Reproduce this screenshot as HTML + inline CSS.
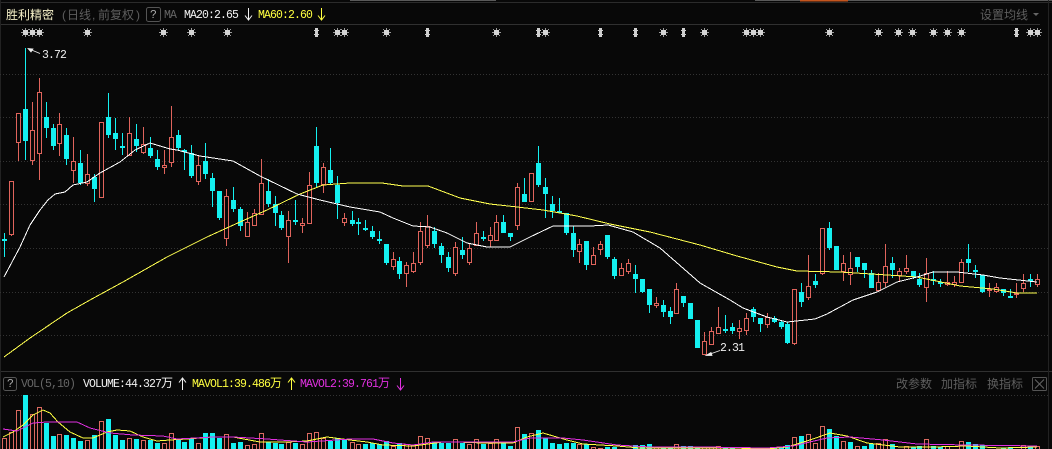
<!DOCTYPE html>
<html><head><meta charset="utf-8"><style>
html,body{margin:0;padding:0;background:#080808;width:1052px;height:449px;overflow:hidden}
svg{display:block}
text{font-family:"Liberation Mono","Noto Sans CJK SC",monospace;font-size:11.5px;letter-spacing:-.9px}
.c,tspan.c{font-family:"Liberation Sans","Noto Sans CJK SC",sans-serif;font-size:12px;letter-spacing:0}
polyline{shape-rendering:crispEdges}
</style></head><body>
<svg width="1052" height="449" viewBox="0 0 1052 449" xmlns="http://www.w3.org/2000/svg">
<rect width="1052" height="449" fill="#080808"/>
<g shape-rendering="crispEdges" fill="none">
<path d="M0 2.5H1052" stroke="#2b2b2b"/>
<path d="M350 0.5H496M755 0.5H1052" stroke="#5a5a5a"/>
<path d="M800 0.5H848" stroke="#c4551e" stroke-width="2"/>
<path d="M0 24.5H1040M0 371.5H1052" stroke="#303030"/>
<path d="M0.5 0V449M1048.5 0V449" stroke="#222"/>
<path d="M0 74.5H1048M0 117.5H1048M0 161.5H1048M0 204.5H1048M0 248.5H1048M0 292.5H1048M0 335.5H1048M0 395.5H1048" stroke="#333" stroke-dasharray="1 2"/>
</g>
<!-- volume bars -->
<g shape-rendering="crispEdges" fill="none">
<path stroke="#14f0f0" stroke-width="5" d="M25.5 395V449M46.5 423V449M53.5 436V449M66.5 435V449M73.5 438V449M80.5 441V449M94.5 435V449M108.5 419V449M115.5 435V449M122.5 440V449M136.5 439V449M150.5 440V449M157.5 443V449M178.5 440V449M184.5 442V449M191.5 438V449M205.5 433V449M212.5 433V449M219.5 438V449M233.5 443V449M240.5 442V449M268.5 442V449M275.5 443V449M281.5 444V449M295.5 443V449M330.5 441V449M337.5 438V449M344.5 439V449M365.5 444V449M372.5 443V449M379.5 444V449M386.5 441V449M399.5 443V449M434.5 442V449M441.5 443V449M448.5 443V449M462.5 443V449M483.5 444V449M503.5 443V449M510.5 446V449M524.5 434V449M538.5 430V449M545.5 438V449M552.5 443V449M559.5 444V449M566.5 443V449M573.5 443V449M586.5 444V449M607.5 447V449M614.5 447V449M635.5 445V449M642.5 445V449M649.5 444V449M663.5 447V449M670.5 447V449M683.5 446V449M690.5 446V449M697.5 447V449M725.5 447V449M732.5 448V449M753.5 448V449M760.5 448V449M774.5 448V449M781.5 448V449M787.5 445V449M801.5 436V449M829.5 429V449M836.5 436V449M850.5 442V449M864.5 446V449M871.5 444V449M892.5 444V449M913.5 447V449M919.5 446V449M933.5 446V449M940.5 447V449M968.5 442V449M975.5 444V449M982.5 445V449M1003.5 448V449M1010.5 447V449M1030.5 446V449"/>
<path stroke="#dc6a60" d="M2.5 449V438.5H6.5V449M9.5 449V432.5H13.5V449M16.5 449V410.5H20.5V449M30.5 449V414.5H34.5V449M37.5 449V407.5H41.5V449M57.5 449V434.5H61.5V449M85.5 449V440.5H89.5V449M99.5 449V421.5H103.5V449M127.5 449V438.5H131.5V449M141.5 449V440.5H145.5V449M162.5 449V443.5H166.5V449M169.5 449V433.5H173.5V449M196.5 449V443.5H200.5V449M224.5 449V434.5H228.5V449M245.5 449V445.5H249.5V449M252.5 449V444.5H256.5V449M259.5 449V433.5H263.5V449M286.5 449V442.5H290.5V449M300.5 449V444.5H304.5V449M307.5 449V433.5H311.5V449M314.5 449V432.5H318.5V449M321.5 449V438.5H325.5V449M350.5 449V442.5H354.5V449M356.5 449V444.5H360.5V449M391.5 449V446.5H395.5V449M404.5 449V444.5H408.5V449M411.5 449V445.5H415.5V449M418.5 449V436.5H422.5V449M425.5 449V438.5H429.5V449M453.5 449V439.5H457.5V449M467.5 449V444.5H471.5V449M474.5 449V439.5H478.5V449M488.5 449V443.5H492.5V449M494.5 449V439.5H498.5V449M515.5 449V427.5H519.5V449M529.5 449V433.5H533.5V449M577.5 449V444.5H581.5V449M591.5 449V447.5H595.5V449M598.5 449V448.5H602.5V449M654.5 449V447.5H658.5V449M674.5 449V444.5H678.5V449M702.5 449V447.5H706.5V449M709.5 449V447.5H713.5V449M716.5 449V446.5H720.5V449M744.5 449V447.5H748.5V449M792.5 449V437.5H796.5V449M806.5 449V434.5H810.5V449M813.5 449V443.5H817.5V449M820.5 449V426.5H824.5V449M841.5 449V441.5H845.5V449M855.5 449V446.5H859.5V449M876.5 449V443.5H880.5V449M883.5 449V439.5H887.5V449M904.5 449V446.5H908.5V449M924.5 449V439.5H928.5V449M945.5 449V446.5H949.5V449M959.5 449V441.5H963.5V449M1021.5 449V445.5H1025.5V449M1035.5 449V446.5H1039.5V449"/>
</g>
<polyline fill="none" stroke="#ffff40" points="3,437 13,432 23,425 33,415 43,410 50,413 58,422 70,432 83,438 93,438 107,432 117,430 130,431 143,437 157,441 170,440 187,439 213,437 233,437 260,442 287,442 307,441 327,437 350,440 367,442 383,445 413,446 443,442 457,442 483,443 513,443 527,437 543,433 567,440 583,444 617,446 640,448 733,448 767,449 787,447 810,440 830,433 847,436 867,443 900,447 933,447 967,446 1000,448 1037,447"/>
<polyline fill="none" stroke="#e030e0" points="3,429 17,431 33,423 47,422 77,422 90,428 110,433 133,435 163,436 177,439 213,437 233,437 267,439 307,442 350,439 373,439 393,443 413,445 433,442 483,442 513,442 530,438 563,438 583,440 617,445 650,447 700,447 767,448 793,446 827,438 850,437 883,440 917,444 967,445 1037,446"/>
<!-- candles -->
<g shape-rendering="crispEdges">
<path fill="none" stroke="#14f0f0" d="M4.5 233V257M25.5 48V160M46.5 102V138M53.5 124V150M66.5 128V165M80.5 150V185M94.5 174V202M108.5 93V138M115.5 118V150M122.5 133V155M136.5 124V152M150.5 137V158M157.5 150V170M178.5 130V150M184.5 149V170M191.5 145V178M205.5 143V179M212.5 173V207M219.5 191V220M233.5 187V212M240.5 207V231M268.5 179V207M275.5 196V226M281.5 211V230M295.5 200V225M316.5 127V187M330.5 148V185M337.5 176V219M352.5 211V226M358.5 218V235M365.5 220V231M372.5 226V239M379.5 231V244M386.5 244V265M399.5 257V279M434.5 227V248M441.5 243V263M448.5 252V272M462.5 237V259M483.5 231V241M503.5 215V233M510.5 233V241M524.5 178V202M538.5 146V187M545.5 178V218M552.5 196V218M559.5 198V213M566.5 213V235M573.5 226V257M586.5 241V270M607.5 235V259M614.5 257V279M635.5 265V293M642.5 279V293M649.5 289V313M663.5 300V317M670.5 307V324M683.5 296V307M690.5 303V319M697.5 320V348M725.5 315V333M732.5 323V334M753.5 307V322M760.5 318V332M774.5 316V323M781.5 320V329M787.5 322V344M801.5 283V307M815.5 274V288M829.5 222V250M836.5 246V270M857.5 257V272M864.5 263V278M871.5 270V288M892.5 257V278M913.5 271V279M919.5 273V287M933.5 271V285M940.5 279V287M968.5 244V272M975.5 265V278M982.5 275V293M1003.5 289V296M1010.5 289V297M1030.5 274V287"/>
<path fill="none" stroke="#14f0f0" stroke-width="5" d="M4.5 239V241M25.5 109V141M46.5 117V128M53.5 128V146M66.5 135V159M80.5 163V183M94.5 177V189M108.5 117V135M115.5 133V139M122.5 146V148M136.5 139V146M150.5 148V156M157.5 159V167M178.5 135V148M184.5 150V152M191.5 153V176M205.5 161V174M212.5 178V191M219.5 191V218M233.5 200V209M240.5 209V226M268.5 191V204M275.5 204V213M281.5 215V228M295.5 220V222M316.5 146V183M330.5 170V183M337.5 185V203M352.5 220V224M358.5 222V224M365.5 228V230M372.5 231V237M379.5 239V241M386.5 244V263M399.5 261V274M434.5 231V244M441.5 246V255M448.5 257V268M462.5 250V255M483.5 237V239M503.5 222V233M510.5 233V237M524.5 194V202M538.5 163V185M545.5 187V194M552.5 204V211M559.5 211V213M566.5 213V233M573.5 233V250M586.5 241V265M607.5 235V257M614.5 259V276M635.5 274V279M642.5 279V292M649.5 289V305M663.5 305V312M670.5 311V317M683.5 296V303M690.5 303V319M697.5 320V348M725.5 329V331M732.5 327V331M753.5 309V317M760.5 318V324M774.5 318V322M781.5 322V327M787.5 324V343M801.5 292V302M815.5 281V285M829.5 228V248M836.5 246V270M857.5 257V267M864.5 263V270M871.5 273V288M892.5 263V270M913.5 271V277M919.5 279V285M933.5 279V281M940.5 282V284M968.5 259V263M975.5 270V272M982.5 275V292M1003.5 289V293M1010.5 296V298M1030.5 279V281"/>
<path fill="none" stroke="#e0645c" d="M11.5 181V236M18.5 113V161M32.5 102V165M39.5 78V180M59.5 113V156M73.5 137V183M87.5 154V186M101.5 122V197M129.5 117V155M143.5 127V154M164.5 150V174M171.5 106V167M198.5 155V185M226.5 189V246M247.5 212V237M254.5 209V225M261.5 159V215M288.5 211V263M302.5 218V233M309.5 172V223M323.5 163V193M344.5 213V226M393.5 252V270M406.5 262V287M413.5 252V273M420.5 222V265M427.5 215V248M455.5 242V276M469.5 244V265M476.5 222V246M490.5 227V247M496.5 215V240M517.5 183V230M531.5 173V202M579.5 239V263M593.5 247V265M600.5 241V255M621.5 263V275M628.5 259V274M656.5 297V308M676.5 283V313M704.5 332V355M711.5 327V344M718.5 307V333M739.5 320V339M746.5 313V335M767.5 313V328M794.5 289V345M808.5 255V300M822.5 228V275M843.5 255V281M850.5 252V285M878.5 273V292M885.5 244V287M899.5 268V281M906.5 255V274M926.5 258V302M947.5 271V286M954.5 276V287M961.5 259V283M989.5 283V297M996.5 283V293M1016.5 283V298M1023.5 274V292M1037.5 274V287"/>
<path fill="#080808" stroke="#e0645c" d="M9.5 181.5H13.5V234.5H9.5ZM16.5 113.5H20.5V142.5H16.5ZM30.5 130.5H34.5V160.5H30.5ZM37.5 92.5H41.5V153.5H37.5ZM57.5 124.5H61.5V143.5H57.5ZM71.5 161.5H75.5V170.5H71.5ZM85.5 174.5H89.5V183.5H85.5ZM99.5 122.5H103.5V197.5H99.5ZM127.5 133.5H131.5V155.5H127.5ZM141.5 144.5H145.5V152.5H141.5ZM162.5 165.5H166.5V167.5H162.5ZM169.5 137.5H173.5V162.5H169.5ZM196.5 165.5H200.5V181.5H196.5ZM224.5 196.5H228.5V238.5H224.5ZM245.5 222.5H249.5V236.5H245.5ZM252.5 213.5H256.5V225.5H252.5ZM259.5 183.5H263.5V214.5H259.5ZM286.5 220.5H290.5V236.5H286.5ZM300.5 223.5H304.5V225.5H300.5ZM307.5 185.5H311.5V223.5H307.5ZM321.5 167.5H325.5V184.5H321.5ZM342.5 218.5H346.5V222.5H342.5ZM391.5 259.5H395.5V266.5H391.5ZM404.5 265.5H408.5V273.5H404.5ZM411.5 263.5H415.5V271.5H411.5ZM418.5 231.5H422.5V262.5H418.5ZM425.5 226.5H429.5V245.5H425.5ZM453.5 247.5H457.5V273.5H453.5ZM467.5 248.5H471.5V262.5H467.5ZM474.5 233.5H478.5V245.5H474.5ZM488.5 235.5H492.5V240.5H488.5ZM494.5 222.5H498.5V240.5H494.5ZM515.5 187.5H519.5V225.5H515.5ZM529.5 173.5H533.5V201.5H529.5ZM577.5 244.5H581.5V251.5H577.5ZM591.5 255.5H595.5V264.5H591.5ZM598.5 244.5H602.5V249.5H598.5ZM619.5 268.5H623.5V275.5H619.5ZM626.5 263.5H630.5V271.5H626.5ZM654.5 303.5H658.5V305.5H654.5ZM674.5 289.5H678.5V313.5H674.5ZM702.5 341.5H706.5V354.5H702.5ZM709.5 331.5H713.5V344.5H709.5ZM716.5 327.5H720.5V333.5H716.5ZM737.5 328.5H741.5V331.5H737.5ZM744.5 318.5H748.5V330.5H744.5ZM765.5 317.5H769.5V324.5H765.5ZM792.5 289.5H796.5V343.5H792.5ZM806.5 286.5H810.5V297.5H806.5ZM820.5 228.5H824.5V273.5H820.5ZM841.5 263.5H845.5V271.5H841.5ZM848.5 268.5H852.5V274.5H848.5ZM876.5 282.5H880.5V290.5H876.5ZM883.5 266.5H887.5V282.5H883.5ZM897.5 271.5H901.5V275.5H897.5ZM904.5 268.5H908.5V271.5H904.5ZM924.5 273.5H928.5V287.5H924.5ZM945.5 282.5H949.5V284.5H945.5ZM952.5 282.5H956.5V284.5H952.5ZM959.5 262.5H963.5V282.5H959.5ZM987.5 289.5H991.5V290.5H987.5ZM994.5 287.5H998.5V291.5H994.5ZM1014.5 293.5H1018.5V294.5H1014.5ZM1021.5 283.5H1025.5V288.5H1021.5ZM1035.5 279.5H1039.5V284.5H1035.5Z"/>
</g>
<!-- moving averages -->
<polyline fill="none" stroke="#ffff50" points="4,357 30,338 67,313 90,300 123,282 167,257 207,237 240,222 267,210 300,194 323,185 350,183 382,183 403,186 428,186 460,198 490,204 517,207 543,210 577,216 610,224 650,232 700,245 737,256 777,267 797,271 840,272 887,275 917,277 960,286 993,289 1017,293 1037,293"/>
<polyline fill="none" stroke="#ffffff" points="4,277 20,247 30,225 40,210 48,200 55,194 65,192 73,185 87,182 100,173 120,162 135,150 150,143 170,149 177,150 200,156 233,161 260,176 297,194 320,200 350,207 380,212 393,218 413,226 430,227 447,233 467,243 487,247 510,247 530,237 553,226 590,226 608,225 633,232 660,248 700,283 730,300 743,308 767,317 787,322 815,319 827,314 853,300 877,292 897,282 917,277 933,272 957,272 983,275 1000,278 1037,282"/>
<!-- markers -->
<defs>
<g id="s" shape-rendering="crispEdges"><g fill="#9a9a9a"><rect x="0" y="-4" width="1" height="9"/><rect x="-4" y="0" width="9" height="1"/><rect x="-3" y="-3" width="1" height="1"/><rect x="3" y="-3" width="1" height="1"/><rect x="-3" y="3" width="1" height="1"/><rect x="3" y="3" width="1" height="1"/></g><rect x="-2" y="-2" width="5" height="5" fill="#d4d4d4"/></g>
<g id="d" fill="#cfcfcf" shape-rendering="crispEdges"><rect x="-1" y="-4" width="3" height="9"/><rect x="-2" y="-2" width="1" height="1"/><rect x="2" y="-2" width="1" height="1"/><rect x="-2" y="2" width="1" height="1"/><rect x="2" y="2" width="1" height="1"/></g>
</defs>
<use href="#s" x="25" y="32"/><use href="#s" x="32" y="32"/><use href="#s" x="39" y="32"/><use href="#s" x="87" y="32"/><use href="#s" x="163" y="32"/><use href="#s" x="191" y="32"/><use href="#s" x="227" y="32"/><use href="#d" x="316" y="32"/><use href="#s" x="337" y="32"/><use href="#s" x="344" y="32"/><use href="#s" x="386" y="32"/><use href="#d" x="427" y="32"/><use href="#s" x="496" y="32"/><use href="#d" x="538" y="32"/><use href="#s" x="545" y="32"/><use href="#d" x="600" y="32"/><use href="#d" x="635" y="32"/><use href="#s" x="663" y="32"/><use href="#d" x="683" y="32"/><use href="#s" x="704" y="32"/><use href="#s" x="746" y="32"/><use href="#s" x="753" y="32"/><use href="#s" x="760" y="32"/><use href="#s" x="829" y="32"/><use href="#s" x="878" y="32"/><use href="#s" x="898" y="32"/><use href="#s" x="912" y="32"/><use href="#s" x="933" y="32"/><use href="#s" x="947" y="32"/><use href="#s" x="961" y="32"/><use href="#d" x="1016" y="32"/><use href="#s" x="1030" y="32"/><use href="#s" x="1037" y="32"/>
<!-- header -->
<text class="c" x="6" y="19" fill="#f5f0c8">胜利精密</text>
<text class="c" x="62" y="19" fill="#5e5e5e">(</text>
<text class="c" x="67" y="19" fill="#5e5e5e">日线</text>
<text class="c" x="92" y="19" fill="#5e5e5e">,</text>
<text class="c" x="98" y="19" fill="#5e5e5e">前复权</text>
<text class="c" x="136" y="19" fill="#5e5e5e">)</text>
<rect x="146.5" y="7.5" width="14" height="14" rx="2" fill="none" stroke="#555"/>
<text x="150" y="18" fill="#aaa">?</text>
<text x="164" y="18" fill="#666">MA</text>
<text x="184" y="18" fill="#f2f2f2">MA20:2.65</text>
<path d="M248.5 8V20M245 15.5l3.5 4.5l3.5-4.5" fill="none" stroke="#f2f2f2"/>
<text x="258" y="18" fill="#ffff40">MA60:2.60</text>
<path d="M321.5 8V20M318 15.5l3.5 4.5l3.5-4.5" fill="none" stroke="#ffff40"/>
<text class="c" x="980" y="19" fill="#5e5e5e">设置均线</text>
<path d="M1033 13h6l-3 3z" fill="#666"/>
<!-- price labels -->
<path d="M28 48.5l12 5M28 48.5l5 .5l-2 3z" fill="#eee" stroke="#eee" stroke-width=".8"/>
<text x="42" y="58" fill="#eee">3.72</text>
<path d="M706 355.5l14-5M706 355.5l5-3l1 3z" fill="#eee" stroke="#eee" stroke-width=".8"/>
<text x="720" y="351" fill="#eee">2.31</text>
<!-- vol header -->
<rect x="3.5" y="377.5" width="13" height="13" rx="2" fill="none" stroke="#555"/>
<text x="7" y="387" fill="#aaa">?</text>
<text x="21" y="387" fill="#666">VOL(5,10)</text>
<text x="83" y="387" fill="#f2f2f2">VOLUME:44.327<tspan class="c">万</tspan></text>
<path d="M182.5 378V390M179 382.5l3.5-4.5l3.5 4.5" fill="none" stroke="#f2f2f2"/>
<text x="192" y="387" fill="#ffff40">MAVOL1:39.486<tspan class="c">万</tspan></text>
<path d="M291.5 378V390M288 382.5l3.5-4.5l3.5 4.5" fill="none" stroke="#ffff40"/>
<text x="300" y="387" fill="#e030e0">MAVOL2:39.761<tspan class="c">万</tspan></text>
<path d="M400.5 378V390M397 385.5l3.5 4.5l3.5-4.5" fill="none" stroke="#e030e0"/>
<text class="c" x="896" y="388" fill="#5e5e5e">改参数</text>
<text class="c" x="941" y="388" fill="#5e5e5e">加指标</text>
<text class="c" x="987" y="388" fill="#5e5e5e">换指标</text>
<rect x="1032.5" y="377.5" width="14" height="13" rx="1" fill="none" stroke="#555"/>
<path d="M1035 379.5l9 9M1044 379.5l-9 9" stroke="#666" fill="none"/>
</svg>
</body></html>
